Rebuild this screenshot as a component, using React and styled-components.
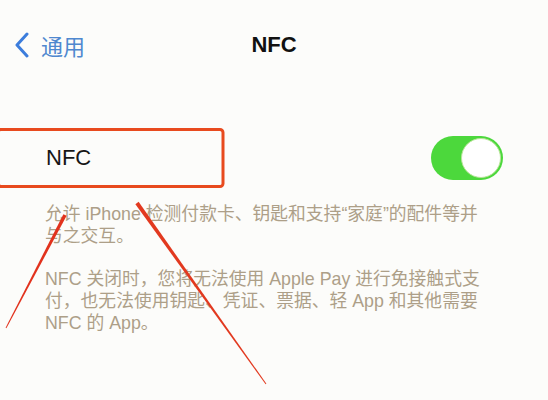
import React, { useState } from 'react';
import styled, { createGlobalStyle } from 'styled-components';

const GlobalStyle = createGlobalStyle`
  body {
    margin: 0;
    background: #fcfcfa;
    font-family: "Liberation Sans", "Noto Sans CJK SC", sans-serif;
  }
`

const Page = styled.div`
  position: relative;
  width: 548px;
  height: 400px;
  overflow: hidden;
  background: #fcfcfa;
`
const NavBar = styled.div`
  height: 90px;
  display: grid;
  grid-template-columns: 1fr auto 1fr;
  align-items: center;
`
const BackButton = styled.div`
  display: flex;
  align-items: center;
  gap: 11px;
  padding-left: 14px;
  color: #4f88cf;
  font-size: 22px;
  font-family: "Noto Sans CJK SC", sans-serif;
`
const Title = styled.h1`
  margin: 0;
  font-size: 22px;
  font-weight: 700;
  color: #111;
  font-family: "Liberation Sans", sans-serif;
`
const Row = styled.div`
  margin-top: 38px;
  height: 59px;
  display: flex;
  align-items: center;
  justify-content: space-between;
  padding: 0 45px 0 46px;
`
const Label = styled.span`
  font-size: 22px;
  color: #161616;
`
const Switch = styled.div`
  width: 72px;
  height: 44px;
  box-sizing: border-box;
  border-radius: 22px;
  padding: 2px;
  display: flex;
  justify-content: ${p => (p.on ? 'flex-end' : 'flex-start')};
  background: ${p => (p.on ? '#4cd83c' : '#e5e5ea')};
  cursor: pointer;
`
const Knob = styled.div`
  width: 40px;
  height: 40px;
  box-sizing: border-box;
  border-radius: 50%;
  background: #fff;
  border: 1px solid #b9e59a;
`
const Footer = styled.div`
  padding: 16px 30px 0 45px;
  display: flex;
  flex-direction: column;
  gap: 21px;
`
const Note = styled.p`
  margin: 0;
  font-size: 17.8px;
  line-height: 22px;
  color: #ad9f88;
  white-space: nowrap;
`
const Overlay = styled.svg`
  position: absolute;
  inset: 0;
  pointer-events: none;
`

const Chevron = () => (
  <svg width="16" height="26" viewBox="0 0 16 26">
    <path d="M13 2 L3 13 L13 24" fill="none" stroke="#3c7ddc" strokeWidth="3" strokeLinecap="round" strokeLinejoin="round" />
  </svg>
)

export default function App() {
  const [nfcOn, setNfcOn] = useState(true);

  return (
    <Page>
      <GlobalStyle />
      <NavBar>
        <BackButton>
          <Chevron />
          <span>通用</span>
        </BackButton>
        <Title>NFC</Title>
        <div />
      </NavBar>

      <Row>
        <Label>NFC</Label>
        <Switch on={nfcOn} onClick={() => setNfcOn(!nfcOn)}>
          <Knob />
        </Switch>
      </Row>

      <Footer>
        <Note>
          允许 iPhone 检测付款卡、钥匙和支持“家庭”的配件等并<br />
          与之交互。
        </Note>
        <Note>
          NFC 关闭时，您将无法使用 Apple Pay 进行免接触式支<br />
          付，也无法使用钥匙、凭证、票据、轻 App 和其他需要<br />
          NFC 的 App。
        </Note>
      </Footer>

      {/* red markup drawn on top of the screen */}
      <Overlay width="548" height="400" viewBox="0 0 548 400">
        <rect x="-2" y="129.5" width="225" height="57" rx="3" fill="none" stroke="#e84a1e" strokeWidth="3" />
        <polygon points="63.4,214.2 66.6,215.8 6.4,328.2 5.6,327.8" fill="#e2321d" />
        <polygon points="138.6,201.8 135.4,204.2 265.6,384.3 266.4,383.7" fill="#e2391f" />
      </Overlay>
    </Page>
  )
}
